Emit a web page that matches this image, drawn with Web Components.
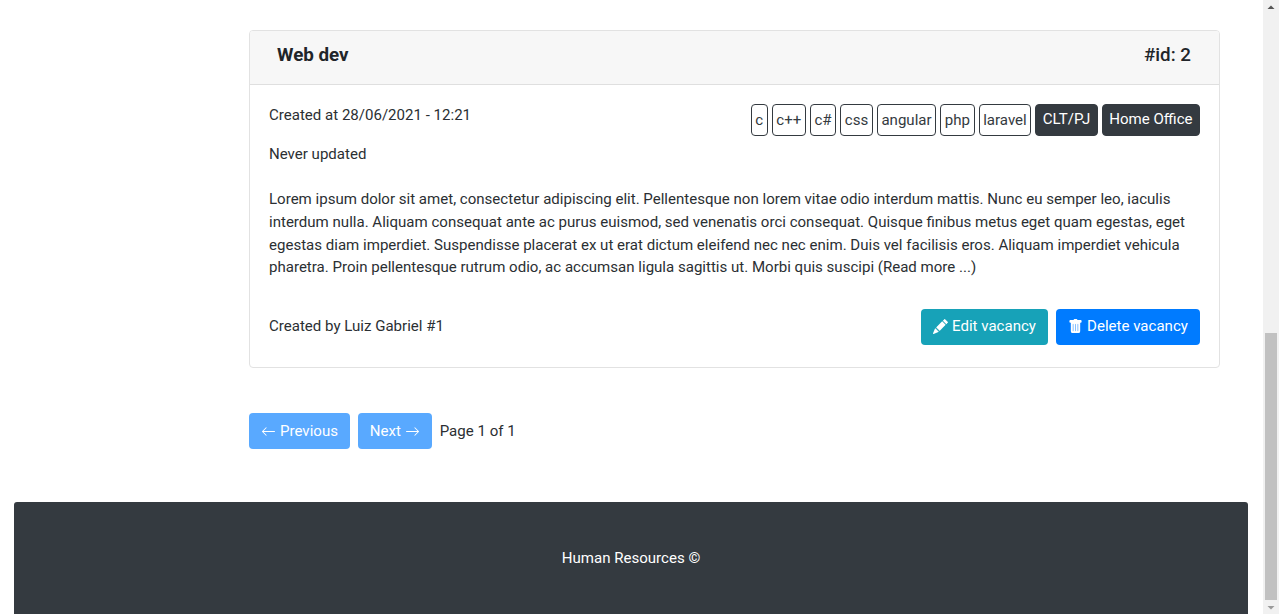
<!DOCTYPE html>
<html lang="en">
<head>
<meta charset="utf-8">
<title>Human Resources</title>
<style>
html,body{margin:0;height:100%;overflow:hidden;background:#fff}
body{font:15.05px/22.6px Roboto,sans-serif;color:#2b2f33}
</style>
</head>
<body>
<hr-page>
  <vacancy-card heading="Web dev" number="2">
    <span slot="created">Created at 28/06/2021 - 12:21</span>
    <span slot="updated">Never updated</span>
    <tag-badge slot="tags">c</tag-badge><tag-badge slot="tags">c++</tag-badge><tag-badge slot="tags">c#</tag-badge><tag-badge slot="tags">css</tag-badge><tag-badge slot="tags">angular</tag-badge><tag-badge slot="tags">php</tag-badge><tag-badge slot="tags">laravel</tag-badge><tag-badge slot="tags" solid>CLT/PJ</tag-badge><tag-badge slot="tags" solid>Home Office</tag-badge>
    <span slot="text">Lorem ipsum dolor sit amet, consectetur adipiscing elit. Pellentesque non lorem vitae odio interdum mattis. Nunc eu semper leo, iaculis<br>interdum nulla. Aliquam consequat ante ac purus euismod, sed venenatis orci consequat. Quisque finibus metus eget quam egestas, eget<br>egestas diam imperdiet. Suspendisse placerat ex ut erat dictum eleifend nec nec enim. Duis vel facilisis eros. Aliquam imperdiet vehicula<br>pharetra. Proin pellentesque rutrum odio, ac accumsan ligula sagittis ut. Morbi quis suscipi (Read more ...)</span>
    <span slot="author">Created by Luiz Gabriel #1</span>
    <action-button slot="actions" style="--bg:#17a2b8;--w:127px"><hr-icon name="pencil"></hr-icon><span>Edit vacancy</span></action-button>
    <action-button slot="actions" style="--w:144px"><hr-icon name="trash"></hr-icon><span>Delete vacancy</span></action-button>
  </vacancy-card>
  <page-nav slot="nav">
    <action-button style="--bg:#59a9ff;--w:101px"><hr-icon name="left"></hr-icon><span>Previous</span></action-button>
    <action-button style="--bg:#59a9ff;--w:74.5px"><span>Next</span><hr-icon name="right"></hr-icon></action-button>
    <span>Page 1 of 1</span>
  </page-nav>
  <page-footer slot="footer">Human Resources ©</page-footer>
</hr-page>
<script>
const define = (name, html, setup) => customElements.define(name, class extends HTMLElement {
  constructor() {
    super();
    this.attachShadow({mode: 'open'}).innerHTML = html;
  }
  connectedCallback() { if (setup) setup(this, this.shadowRoot); }
});

define('hr-icon', `<style>
:host{display:block;width:15px;height:15px;flex:none}
svg{display:block;width:100%;height:100%;fill:currentColor}
rect{display:none}
:host([name=trash]) rect{display:block;opacity:.5}
</style><svg viewBox="0 0 16 16"><rect x="4" y="4" width="8" height="10"/><path/></svg>`, (el, root) => {
  root.querySelector('path').setAttribute('d', {
    pencil: 'M12.854.146a.5.5 0 0 0-.707 0L10.5 1.793 14.207 5.5l1.647-1.646a.5.5 0 0 0 0-.708l-3-3zm.646 6.061L9.793 2.5 3.293 9H3.5a.5.5 0 0 1 .5.5v.5h.5a.5.5 0 0 1 .5.5v.5h.5a.5.5 0 0 1 .5.5v.5h.5a.5.5 0 0 1 .5.5v.207l6.5-6.5zm-7.468 7.468A.5.5 0 0 1 6 13.5V13h-.5a.5.5 0 0 1-.5-.5V12h-.5a.5.5 0 0 1-.5-.5V11h-.5a.5.5 0 0 1-.5-.5V10h-.5a.499.499 0 0 1-.175-.032l-.179.178a.5.5 0 0 0-.11.168l-2 5a.5.5 0 0 0 .65.65l5-2a.5.5 0 0 0 .168-.11l.178-.178z',
    trash: 'M2.5 1a1 1 0 0 0-1 1v1a1 1 0 0 0 1 1H3v9a2 2 0 0 0 2 2h6a2 2 0 0 0 2-2V4h.5a1 1 0 0 0 1-1V2a1 1 0 0 0-1-1H10a1 1 0 0 0-1-1H7a1 1 0 0 0-1 1H2.5zm3 4a.5.5 0 0 1 .5.5v7a.5.5 0 0 1-1 0v-7a.5.5 0 0 1 .5-.5zM8 5a.5.5 0 0 1 .5.5v7a.5.5 0 0 1-1 0v-7A.5.5 0 0 1 8 5zm3 .5v7a.5.5 0 0 1-1 0v-7a.5.5 0 0 1 1 0z',
    left: 'M15 8a.5.5 0 0 0-.5-.5H2.707l3.147-3.146a.5.5 0 1 0-.708-.708l-4 4a.5.5 0 0 0 0 .708l4 4a.5.5 0 0 0 .708-.708L2.707 8.5H14.5A.5.5 0 0 0 15 8z',
    right: 'M1 8a.5.5 0 0 1 .5-.5h11.793l-3.147-3.146a.5.5 0 0 1 .708-.708l4 4a.5.5 0 0 1 0 .708l-4 4a.5.5 0 0 1-.708-.708L13.293 8.5H1.5A.5.5 0 0 1 1 8z'
  }[el.getAttribute('name')]);
});

define('tag-badge', `<style>
:host{display:block;box-sizing:border-box;height:32px;padding:0 3.6px;border:1px solid #343a40;border-radius:4px;line-height:30px;white-space:nowrap;background:#fff;color:#343a40}
:host([solid]){background:#343a40;color:#fff;padding:0 6.5px;line-height:28px}
</style><slot></slot>`);

define('action-button', `<style>
:host{display:flex;box-sizing:border-box;width:var(--w);height:36px;align-items:center;justify-content:center;gap:4px;border-radius:4px;background:var(--bg,#007bff);color:#fff;white-space:nowrap}
</style><slot></slot>`);

define('vacancy-card', `<style>
:host{display:block;box-sizing:border-box;width:971px;height:338px;border:1px solid #e2e2e2;border-radius:4px;overflow:hidden}
header{display:flex;justify-content:space-between;box-sizing:border-box;height:54px;padding:13px 28px 0 27px;background:#f7f7f7;border-bottom:1px solid #dfdfdf;font-size:18.8px;font-weight:500;line-height:23px;color:#212529}
b{font-weight:700}
.body{padding:19px 19px 0}
.row{display:flex;justify-content:space-between}
.dates{display:flex;flex-direction:column;gap:16.4px}
.tags{display:flex;gap:4px}
.text{margin-top:22.8px;white-space:nowrap}
.foot{margin-top:29.8px;align-items:center}
.actions{display:flex;gap:8px}
</style>
<header><b></b><span class="id"></span></header>
<div class="body">
<div class="row"><div class="dates"><slot name="created"></slot><slot name="updated"></slot></div><div class="tags"><slot name="tags"></slot></div></div>
<div class="text"><slot name="text"></slot></div>
<div class="row foot"><slot name="author"></slot><div class="actions"><slot name="actions"></slot></div></div>
</div>`, (el, root) => {
  root.querySelector('b').textContent = el.getAttribute('heading');
  root.querySelector('.id').textContent = '#id: ' + el.getAttribute('number');
});

define('page-nav', `<style>
:host{display:flex;align-items:center;gap:7.6px;margin-top:45px}
</style><slot></slot>`);

define('page-footer', `<style>
:host{display:flex;justify-content:center;box-sizing:border-box;height:130px;margin:53.4px 15px 0 14px;padding-top:45px;border-radius:3px;background:#343a40;color:#fff}
</style><slot></slot>`);

define('scroll-track', `<style>
:host{display:flex;flex-direction:column;box-sizing:border-box;width:16px;height:614px;align-items:center;background:#f1f1f1}
svg{display:block;width:16px;height:14px;flex:none}
.space{height:319px}
.thumb{width:12px;height:267px;background:#c1c1c1}
</style><svg viewBox="0 0 16 14"><path d="M4.5 9h7L8 5.5z" fill="#555"/></svg><div class="space"></div><div class="thumb"></div><svg viewBox="0 0 16 14"><path d="M4.5 6h7L8 9.5z" fill="#9a9a9a"/></svg>`);

define('hr-page', `<style>
:host{display:flex;width:1279px;height:614px;overflow:hidden}
main{width:1263px;padding-top:30px;flex:none}
.content{margin-left:249px}
</style><main><div class="content"><slot></slot><slot name="nav"></slot></div><slot name="footer"></slot></main><scroll-track></scroll-track>`);
</script>
</body>
</html>
